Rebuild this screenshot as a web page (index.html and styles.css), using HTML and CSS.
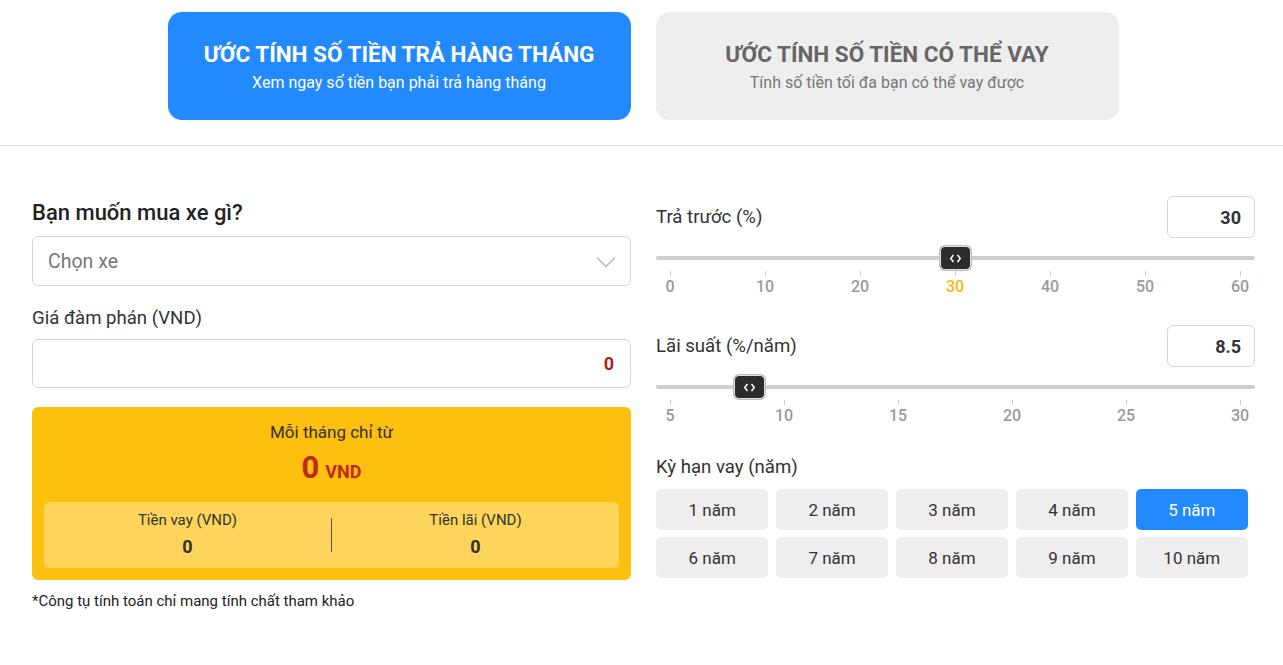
FILE: index.html
```html
<!DOCTYPE html>
<html lang="vi">
<head>
<meta charset="utf-8">
<title>Ước tính</title>
<link rel="stylesheet" href="styles.css">
</head>
<body>
<header class="tabs">
  <div class="tab tab-active">
    <div class="tab-title">ƯỚC TÍNH SỐ TIỀN TRẢ HÀNG THÁNG</div>
    <div class="tab-sub">Xem ngay số tiền bạn phải trả hàng tháng</div>
  </div>
  <div class="tab">
    <div class="tab-title">ƯỚC TÍNH SỐ TIỀN CÓ THỂ VAY</div>
    <div class="tab-sub">Tính số tiền tối đa bạn có thể vay được</div>
  </div>
</header>
<main class="main">
  <section class="col">
    <h2 class="q">Bạn muốn mua xe gì?</h2>
    <div class="select">
      <span class="select-text">Chọn xe</span>
      <svg class="chev" width="20" height="12" viewBox="0 0 20 12"><polyline points="1,1.5 10,10.5 19,1.5" fill="none" stroke="#b5b5b5" stroke-width="1.4"/></svg>
    </div>
    <div class="label">Giá đàm phán (VND)</div>
    <div class="input"><span class="price">0</span></div>
    <div class="result">
      <div class="r-title">Mỗi tháng chỉ từ</div>
      <div class="r-value"><span class="big">0</span> <span class="unit">VND</span></div>
      <div class="r-inner">
        <div class="r-cell">
          <div class="r-lab">Tiền vay (VND)</div>
          <div class="r-num">0</div>
        </div>
        <div class="r-div"></div>
        <div class="r-cell">
          <div class="r-lab">Tiền lãi (VND)</div>
          <div class="r-num">0</div>
        </div>
      </div>
    </div>
    <p class="note">*Công tụ tính toán chỉ mang tính chất tham khảo</p>
  </section>
  <section class="col">
    <div class="row">
      <span class="rlabel">Trả trước (%)</span>
      <div class="numbox">30</div>
    </div>
    <div class="track">
      <div class="thumb" style="--p:0.5">
        <svg width="11" height="9" viewBox="0 0 11 9"><polyline points="3.5,1 0.8,4.5 3.5,8" fill="none" stroke="#fff" stroke-width="1.5"/><polyline points="7.5,1 10.2,4.5 7.5,8" fill="none" stroke="#fff" stroke-width="1.5"/></svg>
      </div>
    </div>
    <div class="ticks">
      <span class="tick">0</span><span class="tick">10</span><span class="tick">20</span><span class="tick tick-on">30</span><span class="tick">40</span><span class="tick">50</span><span class="tick">60</span>
    </div>
    <div class="row row2">
      <span class="rlabel">Lãi suất (%/năm)</span>
      <div class="numbox">8.5</div>
    </div>
    <div class="track">
      <div class="thumb" style="--p:0.14">
        <svg width="11" height="9" viewBox="0 0 11 9"><polyline points="3.5,1 0.8,4.5 3.5,8" fill="none" stroke="#fff" stroke-width="1.5"/><polyline points="7.5,1 10.2,4.5 7.5,8" fill="none" stroke="#fff" stroke-width="1.5"/></svg>
      </div>
    </div>
    <div class="ticks">
      <span class="tick">5</span><span class="tick">10</span><span class="tick">15</span><span class="tick">20</span><span class="tick">25</span><span class="tick">30</span>
    </div>
    <div class="label term">Kỳ hạn vay (năm)</div>
    <div class="terms">
      <div class="term-btn">1 năm</div>
      <div class="term-btn">2 năm</div>
      <div class="term-btn">3 năm</div>
      <div class="term-btn">4 năm</div>
      <div class="term-btn term-on">5 năm</div>
      <div class="term-btn">6 năm</div>
      <div class="term-btn">7 năm</div>
      <div class="term-btn">8 năm</div>
      <div class="term-btn">9 năm</div>
      <div class="term-btn">10 năm</div>
    </div>
  </section>
</main>
</body>
</html>
```
FILE: styles.css
```css
* { box-sizing: border-box; }
body {
  margin: 0;
  font-family: Roboto, "Liberation Sans", sans-serif;
  color: #222;
  background: #fff;
}
.tabs {
  display: flex;
  justify-content: center;
  gap: 25px;
  padding: 12px 0 25px 3px;
  border-bottom: 1px solid #dcdcdc;
}
.tab {
  width: 463px;
  height: 108px;
  border-radius: 14px;
  background: #eeeeee;
  color: #666;
  display: flex;
  flex-direction: column;
  align-items: center;
  justify-content: center;
}
.tab-active { background: #2389ff; color: #fff; }
.tab-title {
  font-size: 22.5px;
  font-weight: 700;
  line-height: 28px;
}
.tab-sub {
  font-size: 16px;
  line-height: 20px;
  margin-top: 5px;
}
.tab:not(.tab-active) .tab-sub { color: #777; }
.main {
  display: flex;
  gap: 25px;
  padding: 50px 0 0 32px;
}
.col { width: 599px; }
.q {
  font-size: 22px;
  font-weight: 500;
  line-height: 26px;
  margin: 4px 0 10px;
  color: #222;
}
.select {
  height: 50px;
  border: 1px solid #d6d6d6;
  border-radius: 6px;
  display: flex;
  align-items: center;
  justify-content: space-between;
  padding: 0 14px 0 15px;
}
.select-text { font-size: 19.5px; color: #777; }
.chev { margin-top: 2px; }
.label {
  font-size: 18.6px;
  line-height: 22px;
  color: #333;
  margin: 21px 0 10px;
}
.input {
  height: 49px;
  border: 1px solid #d6d6d6;
  border-radius: 6px;
  display: flex;
  align-items: center;
  justify-content: flex-end;
  padding-right: 16px;
}
.price { font-size: 18px; font-weight: 700; color: #a52422; }
.result {
  margin-top: 19px;
  background: #fdc00f;
  border-radius: 6px;
  padding: 14px 12px 12px;
  text-align: center;
}
.r-title { font-size: 17px; line-height: 22px; color: #333; }
.r-value { margin-top: 7px; line-height: 36px; color: #c0281e; font-weight: 700; }
.big { font-size: 31px; }
.unit { font-size: 18px; margin-left: 2px; }
.r-inner {
  margin-top: 11px;
  height: 66px;
  background: #fed55a;
  border-radius: 6px;
  display: flex;
  align-items: center;
}
.r-cell { flex: 1; }
.r-div { width: 1px; height: 34px; background: #555; }
.r-lab { font-size: 15px; line-height: 18px; color: #333; }
.r-num { font-size: 18px; font-weight: 700; line-height: 24px; margin-top: 6px; color: #333; }
.note {
  margin: 12px 0 0;
  font-size: 15px;
  line-height: 18px;
  color: #222;
}
.row {
  display: flex;
  align-items: center;
  justify-content: space-between;
}
.row2 { margin-top: 29px; }
.rlabel { font-size: 18.6px; color: #333; }
.numbox {
  width: 88px;
  height: 42px;
  border: 1px solid #d6d6d6;
  border-radius: 6px;
  display: flex;
  align-items: center;
  justify-content: flex-end;
  padding-right: 13px;
  font-size: 18px;
  font-weight: 700;
  color: #333;
}
.track {
  position: relative;
  margin-top: 18px;
  height: 4px;
  border-radius: 2px;
  background: #cfcfcf;
}
.thumb {
  position: absolute;
  top: -10px;
  left: calc(14px + (100% - 28px) * var(--p) - 15.5px);
  width: 31px;
  height: 24px;
  background: #2c2c2c;
  border: 1px solid #e2e2e2;
  border-radius: 5px;
  box-shadow: 0 0 0 1px #bbb;
  display: flex;
  align-items: center;
  justify-content: center;
}
.ticks {
  display: flex;
  justify-content: space-between;
  margin-top: 11px;
  width: 598px;
}
.tick {
  width: 28px;
  display: flex;
  flex-direction: column;
  align-items: center;
  font-size: 16px;
  font-weight: 500;
  line-height: 18px;
  color: #9a9a9a;
}
.tick::before {
  content: "";
  width: 1px;
  height: 5px;
  background: #cfcfcf;
  margin-bottom: 2px;
}
.tick-on { color: #f6b80f; }
.term { margin: 31px 0 11px; }
.terms {
  display: grid;
  grid-template-columns: repeat(5, 1fr);
  gap: 7px 7.5px;
  width: 592px;
}
.term-btn {
  height: 41px;
  border-radius: 5px;
  background: #eeeeee;
  display: flex;
  align-items: center;
  justify-content: center;
  font-size: 17px;
  color: #333;
}
.term-on { background: #2389ff; color: #fff; }
```
